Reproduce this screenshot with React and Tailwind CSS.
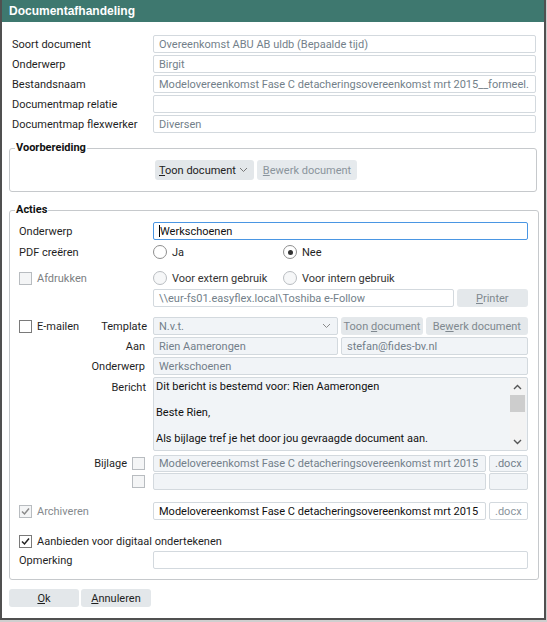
import React from "react";

function Box({ children, className = "" }) {
  return (
    <div
      className={`flex items-center border rounded-[2px] px-[5px] whitespace-nowrap overflow-hidden ${className}`}
    >
      {children}
    </div>
  );
}

function Check({ checked, disabled }) {
  return (
    <span
      className={`w-[13px] h-[13px] shrink-0 flex items-center justify-center border ${
        disabled ? "border-[#b8bcc0] bg-[#f4f5f6]" : "border-[#7a7a7a] bg-white"
      }`}
    >
      {checked && (
        <svg width="11" height="11" viewBox="0 0 11 11">
          <polyline
            points="2,5.5 4.5,8 9,2.5"
            fill="none"
            stroke={disabled ? "#8a8a8a" : "#222"}
            strokeWidth="1.5"
          />
        </svg>
      )}
    </span>
  );
}

function Radio({ checked, disabled }) {
  return (
    <span
      className={`w-[14px] h-[14px] shrink-0 rounded-full border flex items-center justify-center ${
        disabled ? "border-[#b9bdc1] bg-[#f6f7f8]" : "border-[#8e8e8e] bg-white"
      }`}
    >
      {checked && <span className="w-[5px] h-[5px] rounded-full bg-[#333]" />}
    </span>
  );
}

function Chevron({ color = "#777" }) {
  return (
    <svg width="9" height="6" viewBox="0 0 9 6">
      <polyline points="1,1 4.5,4.5 8,1" fill="none" stroke={color} strokeWidth="1" />
    </svg>
  );
}

function TopRow({ label, value }) {
  return (
    <div className="flex h-[18px]">
      <div className="w-[144px] pl-[3px] flex items-center">{label}</div>
      <Box className="flex-1 mr-px border-[#d3d9de] bg-white text-[#737f8a]">{value}</Box>
    </div>
  );
}

export default function App() {
  return (
    <div className="w-[547px] h-[622px] flex items-start bg-[#cfcfcf] font-['Roboto',sans-serif] text-[11px] text-[#1f1f1f] leading-none">
      <div className="w-[546px] h-[620px] flex flex-col bg-white border-l-2 border-r-2 border-b-2 border-[#505050]">
        <div className="h-[22px] shrink-0 bg-[#3e786f] flex items-center pl-[7px] text-white font-['Liberation_Sans',sans-serif] font-bold text-[12px]">
          Documentafhandeling
        </div>

        <div className="flex flex-col px-[7px] pt-[13px]">
          <div className="flex flex-col gap-[2px]">
            <TopRow label="Soort document" value="Overeenkomst ABU AB uldb (Bepaalde tijd)" />
            <TopRow label="Onderwerp" value="Birgit" />
            <TopRow
              label="Bestandsnaam"
              value="Modelovereenkomst Fase C detacheringsovereenkomst mrt 2015__formeel."
            />
            <TopRow label="Documentmap relatie" value="" />
            <TopRow label="Documentmap flexwerker" value="Diversen" />
          </div>

          <fieldset className="mt-[8px] border border-[#c6c9cc] rounded-[3px] px-[5px] pb-[11px]">
            <legend className="px-[1px] font-bold text-[#111] leading-[14px]">Voorbereiding</legend>
            <div className="flex pl-[140px] pt-[5px] gap-[3px] whitespace-nowrap">
              <div className="w-[99px] h-[20px] rounded-[3px] bg-[#e3e7ea] flex items-center pl-[4px] pr-[6px] justify-between text-[#222]">
                <span>
                  <u>T</u>oon document
                </span>
                <Chevron />
              </div>
              <div className="w-[100px] h-[20px] rounded-[3px] bg-[#e6eaed] flex items-center justify-center text-[#8a949c]">
                <span>
                  <u>B</u>ewerk document
                </span>
              </div>
            </div>
          </fieldset>

          <fieldset className="mt-[11px] border border-[#c6c9cc] rounded-[3px] pl-[9px] pr-[10px] pb-[10px] whitespace-nowrap">
            <legend className="ml-[-4px] px-[1px] font-bold text-[#111] leading-[14px]">Acties</legend>

            <div className="flex h-[18px] mt-[5px]">
              <div className="w-[134px] flex items-center">Onderwerp</div>
              <Box className="flex-1 border-[#4a96e3] bg-white text-[#111] pl-[5px]">
                <span className="w-px h-[12px] bg-black" />
                Werkschoenen
              </Box>
            </div>

            <div className="flex h-[16px] mt-[4px] items-center">
              <div className="w-[134px]">PDF creëren</div>
              <div className="w-[130px] flex items-center gap-[5px]">
                <Radio />
                <span>Ja</span>
              </div>
              <div className="flex items-center gap-[5px]">
                <Radio checked />
                <span>Nee</span>
              </div>
            </div>

            <div className="flex h-[16px] mt-[10px] items-center">
              <div className="w-[134px] flex items-center gap-[5px] text-[#7c7f82]">
                <Check disabled />
                <span>Afdrukken</span>
              </div>
              <div className="w-[130px] flex items-center gap-[5px] text-[#333]">
                <Radio disabled />
                <span>Voor extern gebruik</span>
              </div>
              <div className="flex items-center gap-[5px] text-[#333]">
                <Radio disabled />
                <span>Voor intern gebruik</span>
              </div>
            </div>

            <div className="flex h-[18px] mt-[3px]">
              <div className="w-[134px]" />
              <Box className="w-[301px] border-[#d3d9de] bg-white text-[#737f8a]">
                \\eur-fs01.easyflex.local\Toshiba e-Follow
              </Box>
              <div className="ml-[3px] flex-1 rounded-[3px] bg-[#e4e8eb] flex items-center justify-center text-[#7f888f]">
                <span>
                  <u>P</u>rinter
                </span>
              </div>
            </div>

            <div className="flex h-[18px] mt-[10px]">
              <div className="w-[134px] flex items-center justify-between pr-[6px]">
                <div className="flex items-center gap-[5px]">
                  <Check />
                  <span>E-mailen</span>
                </div>
                <span>Template</span>
              </div>
              <Box className="w-[185px] border-[#d3d9de] bg-[#f1f4f7] text-[#737f8a] justify-between pr-[6px]">
                <span>N.v.t.</span>
                <Chevron color="#8a8a8a" />
              </Box>
              <div className="ml-[3px] w-[82px] rounded-[3px] bg-[#e4e8eb] flex items-center justify-center text-[#7f888f]">
                <span>
                  Toon <u>d</u>ocument
                </span>
              </div>
              <div className="ml-[3px] flex-1 rounded-[3px] bg-[#e4e8eb] flex items-center justify-center text-[#7f888f]">
                <span>
                  Be<u>w</u>erk document
                </span>
              </div>
            </div>

            <div className="flex h-[18px] mt-[2px]">
              <div className="w-[134px] flex items-center justify-end pr-[8px]">Aan</div>
              <Box className="w-[185px] border-[#d3d9de] bg-[#f1f4f7] text-[#737f8a]">Rien Aamerongen</Box>
              <Box className="ml-[3px] flex-1 border-[#d3d9de] bg-[#f1f4f7] text-[#737f8a]">
                stefan@fides-bv.nl
              </Box>
            </div>

            <div className="flex h-[18px] mt-[2px]">
              <div className="w-[134px] flex items-center justify-end pr-[8px]">Onderwerp</div>
              <Box className="flex-1 border-[#d3d9de] bg-[#f1f4f7] text-[#737f8a]">Werkschoenen</Box>
            </div>

            <div className="flex h-[74px] mt-[2px]">
              <div className="w-[134px] flex justify-end pr-[7px] pt-[5px]">Bericht</div>
              <div className="flex-1 flex border border-[#d3d9de] rounded-[2px] bg-[#f1f4f7] overflow-hidden">
                <div className="flex-1 pl-[2px] pt-[2px] leading-[13px] text-[#111]">
                  <div>Dit bericht is bestemd voor: Rien Aamerongen</div>
                  <div className="h-[13px]" />
                  <div>Beste Rien,</div>
                  <div className="h-[13px]" />
                  <div>Als bijlage tref je het door jou gevraagde document aan.</div>
                </div>
                <div className="w-[16px] mr-px bg-[#f3f3f3] flex flex-col items-center">
                  <div className="h-[17px] flex items-center justify-center">
                    <svg width="9" height="6" viewBox="0 0 9 6">
                      <polyline points="1,5 4.5,1.5 8,5" fill="none" stroke="#555" strokeWidth="1.4" />
                    </svg>
                  </div>
                  <div className="w-[15px] h-[17px] bg-[#cdcdcd]" />
                  <div className="flex-1" />
                  <div className="h-[17px] flex items-center justify-center">
                    <svg width="9" height="6" viewBox="0 0 9 6">
                      <polyline points="1,1 4.5,4.5 8,1" fill="none" stroke="#555" strokeWidth="1.4" />
                    </svg>
                  </div>
                </div>
              </div>
            </div>

            <div className="flex h-[17px] mt-[4px]">
              <div className="w-[134px] flex items-center justify-end gap-[5px] pr-[8px]">
                <span>Bijlage</span>
                <Check disabled />
              </div>
              <Box className="w-[333px] border-[#d3d9de] bg-[#f1f4f7] text-[#737f8a]">
                Modelovereenkomst Fase C detacheringsovereenkomst mrt 2015
              </Box>
              <Box className="ml-[3px] flex-1 border-[#d3d9de] bg-[#f1f4f7] text-[#737f8a] justify-center">
                .docx
              </Box>
            </div>

            <div className="flex h-[17px] mt-[1px]">
              <div className="w-[134px] flex items-center justify-end pr-[8px]">
                <Check disabled />
              </div>
              <Box className="w-[333px] border-[#d3d9de] bg-[#f1f4f7]" />
              <Box className="ml-[3px] flex-1 border-[#d3d9de] bg-[#f1f4f7]" />
            </div>

            <div className="flex h-[18px] mt-[12px]">
              <div className="w-[134px] flex items-center gap-[5px] text-[#858a8e]">
                <Check checked disabled />
                <span>Archiveren</span>
              </div>
              <Box className="w-[333px] border-[#d3d9de] bg-white text-[#111]">
                Modelovereenkomst Fase C detacheringsovereenkomst mrt 2015
              </Box>
              <Box className="ml-[3px] flex-1 border-[#d3d9de] bg-white text-[#8a949c] justify-center">
                .docx
              </Box>
            </div>

            <div className="flex h-[14px] mt-[14px] items-center gap-[5px]">
              <Check checked />
              <span>Aanbieden voor digitaal ondertekenen</span>
            </div>

            <div className="flex h-[18px] mt-[3px]">
              <div className="w-[134px] flex items-center">Opmerking</div>
              <Box className="flex-1 border-[#d3d9de] bg-white" />
            </div>
          </fieldset>

          <div className="flex gap-[2px] mt-[9px]">
            <div className="w-[70px] h-[18px] rounded-[3px] bg-[#e3e7ea] flex items-center justify-center">
              <span>
                <u>O</u>k
              </span>
            </div>
            <div className="w-[70px] h-[18px] rounded-[3px] bg-[#e3e7ea] flex items-center justify-center">
              <span>
                <u>A</u>nnuleren
              </span>
            </div>
          </div>
        </div>
      </div>
    </div>
  );
}
